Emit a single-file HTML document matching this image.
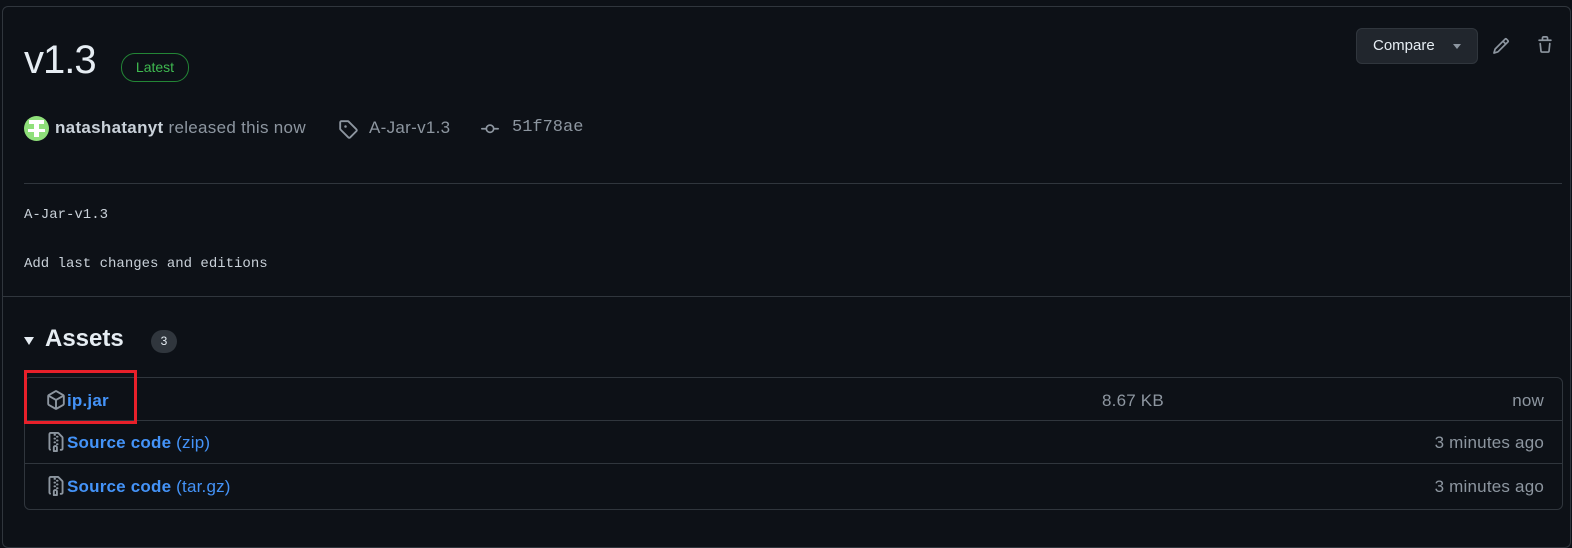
<!DOCTYPE html>
<html><head><meta charset="utf-8"><style>
body{margin:0;background:#0d1117;width:1572px;height:518px;overflow:hidden;font-family:"Liberation Sans",sans-serif;color:#e6edf3;position:relative}
.box{position:absolute;left:2px;top:6px;width:1567px;height:540px;border:1px solid #30363d;border-radius:6px}
.abs{position:absolute}
h1{position:absolute;left:24px;top:38px;margin:0;font-size:40px;font-weight:500;color:#e6edf3;letter-spacing:-1px}
.latest{left:121px;top:53px;width:66px;height:27px;border:1px solid #238636;border-radius:14px;color:#3fb950;font-size:14px;line-height:27px;text-align:center}
.meta{top:118px;font-size:17px;color:#8d96a0;letter-spacing:.3px}
.mono{font-family:"Liberation Mono",monospace}
.cmp{left:1356px;top:28px;width:122px;height:36px;box-sizing:border-box;background:#21262d;border:1px solid #30363d;border-radius:6px;font-size:15px;color:#e6edf3;line-height:34px}
.line{background:#30363d;height:1px}
.tbl{left:24px;top:377px;width:1537px;height:131px;border:1px solid #30363d;border-radius:6px}
.row{position:absolute;left:0;right:0;height:43px;border-bottom:1px solid #30363d}
.lnk{color:#4493f8;font-weight:bold;font-size:17px;letter-spacing:.2px}
.g{color:#8d96a0;font-size:17px;letter-spacing:.2px}
</style></head><body>
<div class="box"></div>
<h1>v1.3</h1>
<div class="abs latest">Latest</div>
<div class="abs" style="left:24px;top:116px;width:25px;height:25px;border-radius:50%;background:#8fe07a;overflow:hidden">
<div style="position:absolute;left:5px;top:4px;width:15px;height:4px;background:#fff"></div>
<div style="position:absolute;left:10px;top:8px;width:5px;height:13px;background:#fff"></div>
<div style="position:absolute;left:4px;top:13px;width:17px;height:3px;background:#fff"></div>
</div>
<div class="abs meta" style="left:55px"><b style="color:#c9d1d9">natashatanyt</b> released this now</div>
<svg class="abs" style="left:338px;top:119px" width="20" height="20" viewBox="0 0 16 16" fill="#8d96a0"><path d="M1 7.775V2.75C1 1.784 1.784 1 2.75 1h5.025c.464 0 .91.184 1.238.513l6.25 6.250a1.75 1.75 0 0 1 0 2.474l-5.026 5.026a1.75 1.75 0 0 1-2.474 0l-6.25-6.25A1.752 1.752 0 0 1 1 7.775Zm1.5 0c0 .066.026.13.073.177l6.25 6.25a.25.25 0 0 0 .354 0l5.025-5.025a.25.25 0 0 0 0-.354l-6.25-6.25a.25.25 0 0 0-.177-.073H2.75a.25.25 0 0 0-.25.25ZM6 5a1 1 0 1 1 0 2 1 1 0 0 1 0-2Z"/></svg>
<div class="abs meta" style="left:369px">A-Jar-v1.3</div>
<svg class="abs" style="left:480px;top:120px" width="20" height="18" viewBox="0 0 16 16" fill="#8d96a0"><path d="M11.93 8.5a4.002 4.002 0 0 1-7.86 0H.75a.75.75 0 0 1 0-1.5h3.32a4.002 4.002 0 0 1 7.86 0h3.32a.75.75 0 0 1 0 1.5Zm-1.43-.75a2.5 2.5 0 1 0-5 0 2.5 2.5 0 0 0 5 0Z"/></svg>
<div class="abs meta mono" style="left:512px;letter-spacing:0">51f78ae</div>
<div class="abs cmp"><span style="margin-left:16px">Compare</span><span style="position:absolute;left:96px;top:15px;border:4px solid transparent;border-top:5px solid #8d96a0"></span></div>
<svg class="abs" style="left:1492px;top:37px" width="18" height="18" viewBox="0 0 16 16" fill="#8d96a0"><path d="M11.013 1.427a1.75 1.75 0 0 1 2.474 0l1.086 1.086a1.75 1.75 0 0 1 0 2.474l-8.61 8.61c-.21.21-.47.364-.756.445l-3.251.93a.75.75 0 0 1-.927-.928l.929-3.25c.081-.286.235-.547.445-.758l8.61-8.61Zm.176 4.823L9.75 4.81l-6.286 6.287a.253.253 0 0 0-.064.108l-.558 1.953 1.953-.558a.253.253 0 0 0 .108-.064Zm1.238-3.763a.25.25 0 0 0-.354 0L10.811 3.75l1.439 1.44 1.263-1.263a.25.25 0 0 0 0-.354Z"/></svg>
<svg class="abs" style="left:1536px;top:36px" width="18" height="18" viewBox="0 0 16 16" fill="#8d96a0"><path d="M11 1.75V3h2.25a.75.75 0 0 1 0 1.5H2.75a.75.75 0 0 1 0-1.5H5V1.75C5 .784 5.784 0 6.75 0h2.5C10.216 0 11 .784 11 1.75ZM4.496 6.675l.66 6.6a.25.25 0 0 0 .249.225h5.19a.25.25 0 0 0 .249-.225l.66-6.6a.75.75 0 0 1 1.492.149l-.66 6.6A1.748 1.748 0 0 1 10.595 15h-5.19a1.75 1.75 0 0 1-1.741-1.575l-.66-6.6a.75.75 0 1 1 1.492-.15ZM6.5 1.75V3h3V1.75a.25.25 0 0 0-.25-.25h-2.5a.25.25 0 0 0-.25.25Z"/></svg>
<div class="abs line" style="left:24px;top:183px;width:1538px"></div>
<div class="abs mono" style="left:24px;top:207px;font-size:14px;color:#c9d1d9">A-Jar-v1.3</div>
<div class="abs mono" style="left:24px;top:256px;font-size:14px;color:#c9d1d9">Add last changes and editions</div>
<div class="abs line" style="left:3px;top:296px;width:1567px"></div>
<div class="abs" style="left:24px;top:337px;border:5px solid transparent;border-top:8px solid #e6edf3;border-bottom:0"></div>
<div class="abs" style="left:45px;top:325px;font-size:24px;font-weight:bold;color:#e6edf3">Assets</div>
<div class="abs" style="left:151px;top:330px;width:26px;height:23px;border-radius:12px;background:#30363d;font-size:12px;line-height:23px;text-align:center">3</div>
<div class="abs tbl">
<div class="row" style="top:0;height:42px">
<svg class="abs" style="left:21px;top:12px" width="20" height="20" viewBox="0 0 16 16" fill="#8d96a0"><path d="m8.878.392 5.25 3.045c.54.314.872.89.872 1.514v6.098a1.75 1.75 0 0 1-.872 1.514l-5.25 3.045a1.75 1.75 0 0 1-1.756 0l-5.25-3.045A1.75 1.75 0 0 1 1 11.049V4.951c0-.624.332-1.201.872-1.514L7.122.392a1.75 1.75 0 0 1 1.756 0ZM7.875 1.69l-4.63 2.685L8 7.133l4.755-2.758-4.63-2.685a.248.248 0 0 0-.25 0ZM2.5 5.677v5.372c0 .09.047.171.125.216l4.625 2.683V8.432Zm6.25 8.271 4.625-2.683a.25.25 0 0 0 .125-.216V5.677L8.75 8.432Z"/></svg>
<span class="abs lnk" style="left:42px;top:13px">ip.jar</span>
<span class="abs g" style="left:1077px;top:13px">8.67 KB</span>
<span class="abs g" style="right:18px;top:13px">now</span>
</div>
<div class="row" style="top:42px">
<svg class="abs" style="left:21px;top:12px" width="20" height="20" viewBox="0 0 16 16" fill="#8d96a0"><path d="M3.5 1.75v11.5c0 .09.048.173.126.217a.75.75 0 0 1-.752 1.298A1.748 1.748 0 0 1 2 13.25V1.75C2 .784 2.784 0 3.75 0h5.586c.464 0 .909.185 1.237.513l2.914 2.914c.329.328.513.773.513 1.237v8.586A1.75 1.75 0 0 1 12.25 15h-.5a.75.75 0 0 1 0-1.5h.5a.25.25 0 0 0 .25-.25V4.664a.25.25 0 0 0-.073-.177L9.513 1.573a.25.25 0 0 0-.177-.073H7.25a.75.75 0 0 1 0 1.5h-.5a.75.75 0 0 1 0-1.5h-3a.25.25 0 0 0-.25.25Zm3.75 8.75h.5c.966 0 1.75.784 1.75 1.75v3a.75.75 0 0 1-.75.75h-2.5a.75.75 0 0 1-.75-.75v-3c0-.966.784-1.75 1.75-1.75ZM6 5.25a.75.75 0 0 1 .75-.75h.5a.75.75 0 0 1 0 1.5h-.5A.75.75 0 0 1 6 5.25Zm.75 2.25h.5a.75.75 0 0 1 0 1.5h-.5a.75.75 0 0 1 0-1.5ZM8 6.75A.75.75 0 0 1 8.75 6h.5a.75.75 0 0 1 0 1.5h-.5A.75.75 0 0 1 8 6.75ZM8.75 3h.5a.75.75 0 0 1 0 1.5h-.5a.75.75 0 0 1 0-1.5ZM8 9.75A.75.75 0 0 1 8.75 9h.5a.75.75 0 0 1 0 1.5h-.5A.75.75 0 0 1 8 9.75Zm-1 2.5v2.25h1v-2.25a.25.25 0 0 0-.25-.25h-.5a.25.25 0 0 0-.25.25Z"/></svg>
<span class="abs lnk" style="left:42px;top:13px">Source code <span style="font-weight:normal">(zip)</span></span>
<span class="abs g" style="right:18px;top:13px">3 minutes ago</span>
</div>
<div class="row" style="top:86px;border-bottom:0">
<svg class="abs" style="left:21px;top:12px" width="20" height="20" viewBox="0 0 16 16" fill="#8d96a0"><path d="M3.5 1.75v11.5c0 .09.048.173.126.217a.75.75 0 0 1-.752 1.298A1.748 1.748 0 0 1 2 13.25V1.75C2 .784 2.784 0 3.75 0h5.586c.464 0 .909.185 1.237.513l2.914 2.914c.329.328.513.773.513 1.237v8.586A1.75 1.75 0 0 1 12.25 15h-.5a.75.75 0 0 1 0-1.5h.5a.25.25 0 0 0 .25-.25V4.664a.25.25 0 0 0-.073-.177L9.513 1.573a.25.25 0 0 0-.177-.073H7.25a.75.75 0 0 1 0 1.5h-.5a.75.75 0 0 1 0-1.5h-3a.25.25 0 0 0-.25.25Zm3.75 8.75h.5c.966 0 1.75.784 1.75 1.75v3a.75.75 0 0 1-.75.75h-2.5a.75.75 0 0 1-.75-.75v-3c0-.966.784-1.75 1.75-1.75ZM6 5.25a.75.75 0 0 1 .75-.75h.5a.75.75 0 0 1 0 1.5h-.5A.75.75 0 0 1 6 5.25Zm.75 2.25h.5a.75.75 0 0 1 0 1.5h-.5a.75.75 0 0 1 0-1.5ZM8 6.75A.75.75 0 0 1 8.75 6h.5a.75.75 0 0 1 0 1.5h-.5A.75.75 0 0 1 8 6.75ZM8.75 3h.5a.75.75 0 0 1 0 1.5h-.5a.75.75 0 0 1 0-1.5ZM8 9.75A.75.75 0 0 1 8.75 9h.5a.75.75 0 0 1 0 1.5h-.5A.75.75 0 0 1 8 9.75Zm-1 2.5v2.25h1v-2.25a.25.25 0 0 0-.25-.25h-.5a.25.25 0 0 0-.25.25Z"/></svg>
<span class="abs lnk" style="left:42px;top:13px">Source code <span style="font-weight:normal">(tar.gz)</span></span>
<span class="abs g" style="right:18px;top:13px">3 minutes ago</span>
</div>
</div>
<div class="abs" style="left:24px;top:370px;width:113px;height:54px;border:3px solid #e8202a;box-sizing:border-box"></div>
</body></html>
